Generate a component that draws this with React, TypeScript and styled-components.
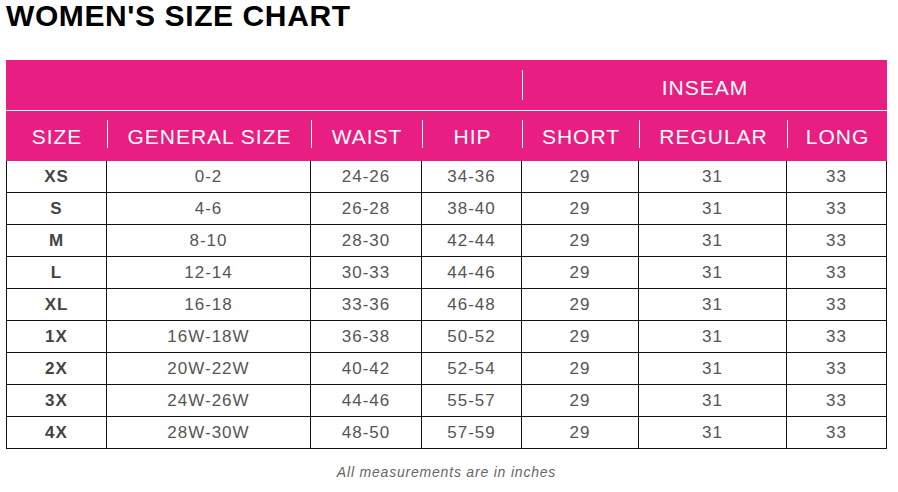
import React from 'react'
import styled, { createGlobalStyle } from 'styled-components'

const GlobalStyle = createGlobalStyle`
  body {
    margin: 0;
    background: #fff;
    font-family: 'Liberation Sans', Arial, sans-serif;
  }
`

const PINK = '#e91e82'

const Page = styled.div`
  padding: 0 6px;
  width: 881px;
`

const Title = styled.h1`
  margin: 0 0 28px;
  font-size: 30px;
  line-height: 32px;
  font-weight: bold;
  letter-spacing: 0.6px;
  color: #000;
`

const Table = styled.table`
  width: 881px;
  table-layout: fixed;
  border-collapse: separate;
  border-spacing: 0;
`

const HeadCell = styled.th<{ $tall?: boolean }>`
  background: ${PINK};
  color: #fff;
  font-weight: normal;
  font-size: 21px;
  letter-spacing: 1px;
  height: 50px;
  padding: ${({ $tall }) => ($tall ? '10px 0 0' : '9px 0 0')};
  vertical-align: top;
  box-sizing: border-box;
  &.top {
    border-bottom: 1px solid #fff;
    height: 51px;
  }
`

const Label = styled.div<{ $sep?: boolean; $h: number }>`
  display: flex;
  align-items: flex-end;
  justify-content: center;
  height: ${({ $h }) => $h}px;
  line-height: 1;
  box-sizing: border-box;
  padding-bottom: ${({ $h }) => ($h > 28 ? 2 : 1)}px;
  border-left: 1px solid ${({ $sep }) => ($sep ? '#fff' : 'transparent')};
`

const Cell = styled.td<{ $bold?: boolean }>`
  height: 32px;
  box-sizing: border-box;
  padding: 0;
  text-align: center;
  vertical-align: middle;
  font-size: 17px;
  letter-spacing: 1px;
  color: ${({ $bold }) => ($bold ? '#444' : '#555')};
  font-weight: ${({ $bold }) => ($bold ? 'bold' : 'normal')};
  border-right: 1px solid #111;
  border-bottom: 1px solid #111;
  &:first-child {
    border-left: 1px solid #111;
  }
`

const Note = styled.p`
  margin: 15px 0 0;
  text-align: center;
  font-size: 14px;
  font-style: italic;
  letter-spacing: 0.8px;
  color: #666;
`

const widths = [101, 204, 111, 100, 117, 148, 100]
const heads = ['SIZE', 'GENERAL SIZE', 'WAIST', 'HIP', 'SHORT', 'REGULAR', 'LONG']

const rows: [string, string, string, string][] = [
  ['XS', '0-2', '24-26', '34-36'],
  ['S', '4-6', '26-28', '38-40'],
  ['M', '8-10', '28-30', '42-44'],
  ['L', '12-14', '30-33', '44-46'],
  ['XL', '16-18', '33-36', '46-48'],
  ['1X', '16W-18W', '36-38', '50-52'],
  ['2X', '20W-22W', '40-42', '52-54'],
  ['3X', '24W-26W', '44-46', '55-57'],
  ['4X', '28W-30W', '48-50', '57-59'],
]

export default function App() {
  return (
    <Page>
      <GlobalStyle />
      <Title>WOMEN'S SIZE CHART</Title>
      <Table>
        <colgroup>
          {widths.map((w, i) => <col key={i} style={{ width: w }} />)}
        </colgroup>
        <thead>
          <tr>
            <HeadCell className='top' colSpan={4} $tall />
            <HeadCell className='top' colSpan={3} $tall>
              <Label $sep $h={30}>INSEAM</Label>
            </HeadCell>
          </tr>
          <tr>
            {heads.map((h, i) => (
              <HeadCell key={h}>
                <Label $sep={i > 0} $h={28}>{h}</Label>
              </HeadCell>
            ))}
          </tr>
        </thead>
        <tbody>
          {rows.map(r => (
            <tr key={r[0]}>
              <Cell $bold>{r[0]}</Cell>
              <Cell>{r[1]}</Cell>
              <Cell>{r[2]}</Cell>
              <Cell>{r[3]}</Cell>
              <Cell>29</Cell>
              <Cell>31</Cell>
              <Cell>33</Cell>
            </tr>
          ))}
        </tbody>
      </Table>
      <Note>All measurements are in inches</Note>
    </Page>
  )
}
